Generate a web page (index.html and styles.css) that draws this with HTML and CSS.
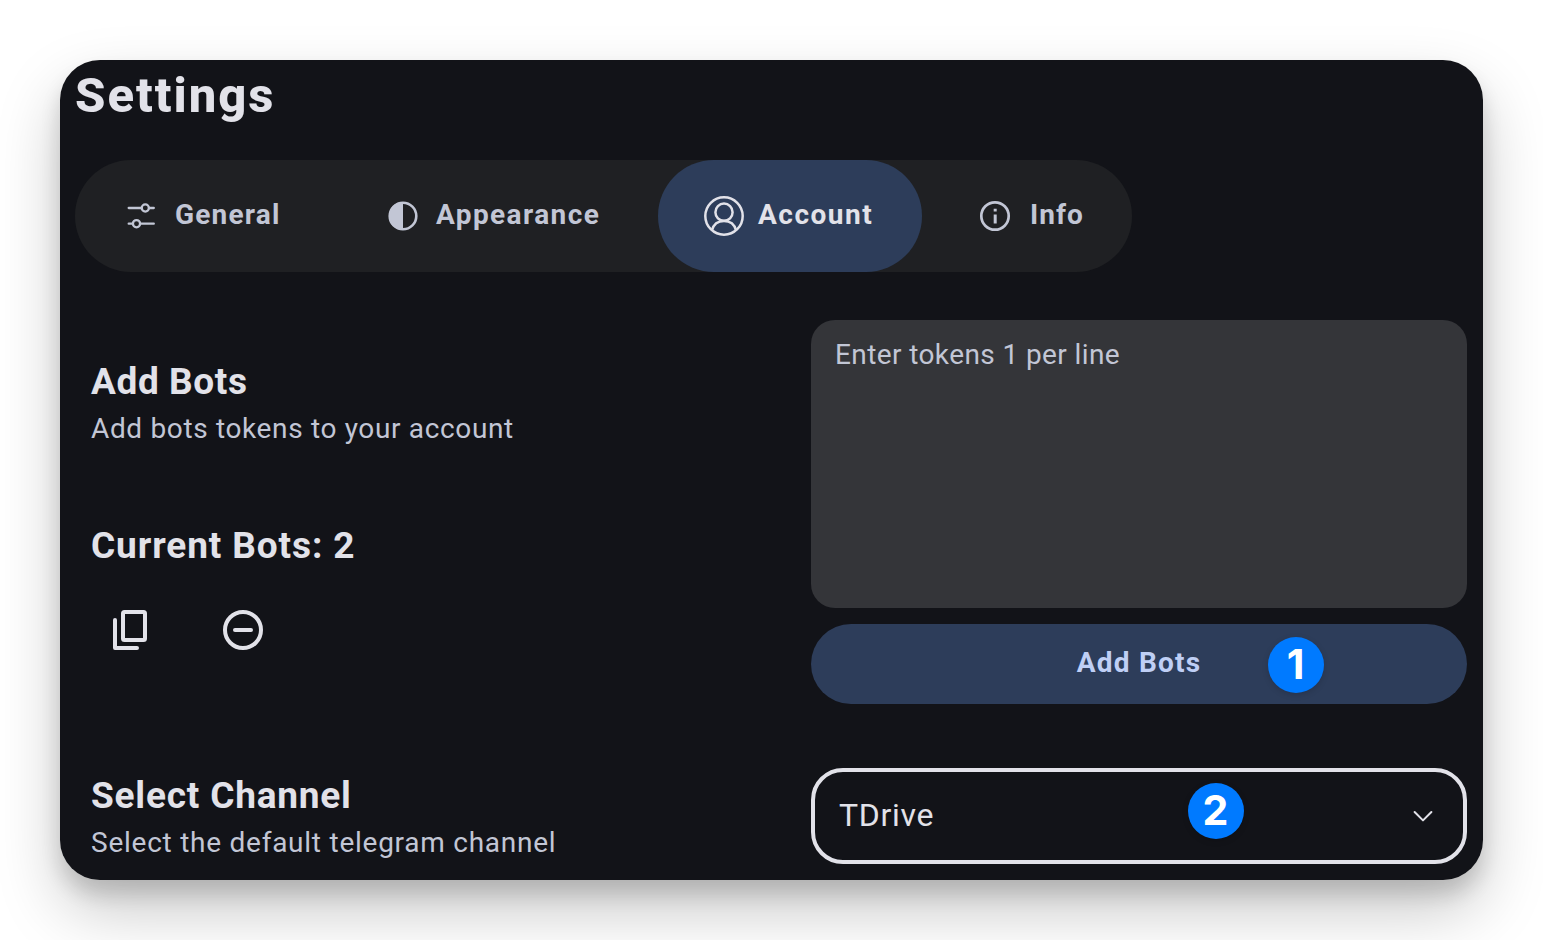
FILE: index.html
```html
<!DOCTYPE html>
<html lang="en">
<head>
<meta charset="utf-8">
<title>Settings</title>
<link rel="stylesheet" href="styles.css">
</head>
<body>
<main class="window">
  <h1 class="title"><span>Settings</span></h1>
  <nav class="tabs">
    <a class="tab tab-general">
      <svg class="icon" width="40" height="40" viewBox="0 0 40 40" fill="none" stroke="currentColor" stroke-width="2.300" stroke-linecap="round"><path d="M7.700 12H20.500M28.500 12H32.800M7.700 27.700H11.500M19.500 27.700H32.800"/><circle cx="24.300" cy="12" r="3.600"/><circle cx="15.500" cy="27.700" r="3.600"/></svg>
      <span class="label general">General</span>
    </a>
    <a class="tab tab-appearance">
      <svg class="icon" width="40" height="40" viewBox="0 0 40 40"><circle cx="20" cy="20" r="13.300" fill="none" stroke="currentColor" stroke-width="2.600"/><path d="M20 6A14 14 0 0 0 20 34Z" fill="currentColor"/></svg>
      <span class="label appearance">Appearance</span>
    </a>
    <a class="tab tab-account active">
      <svg class="icon" width="40" height="40" viewBox="0 0 40 40" fill="none" stroke="currentColor" stroke-width="2.500"><circle cx="20" cy="20" r="18.700"/><circle cx="20" cy="16.200" r="8.600"/><path d="M8 34.200C9.600 28 14.300 24.900 20 24.900S30.400 28 32 34.200"/></svg>
      <span class="label account">Account</span>
    </a>
    <a class="tab tab-info">
      <svg class="icon" width="40" height="40" viewBox="0 0 40 40"><circle cx="20" cy="20" r="13.700" fill="none" stroke="currentColor" stroke-width="2.700"/><path d="M18.700 12.700H21.700V15.500H18.700ZM18.700 18.500H21.700V27.500H18.700Z" fill="currentColor"/></svg>
      <span class="label info">Info</span>
    </a>
  </nav>

  <section class="row bots">
    <div class="copy">
      <h2 class="heading add">Add Bots</h2>
      <p class="hint tokens">Add bots tokens to your account</p>
      <h2 class="heading current">Current Bots: 2</h2>
      <div class="actions">
        <svg width="48" height="48" viewBox="0 0 48 48" fill="none" stroke="currentColor" stroke-width="4" stroke-linecap="round" stroke-linejoin="round"><rect x="16" y="6" width="22" height="28" rx="1.500"/><path d="M8 14V42H30"/></svg>
        <svg width="48" height="48" viewBox="0 0 48 48" fill="none" stroke="currentColor" stroke-width="4" stroke-linecap="round"><circle cx="24" cy="24" r="18"/><path d="M16 24H32"/></svg>
      </div>
    </div>
    <div class="controls">
      <div class="tokens-field"><span>Enter tokens 1 per line</span></div>
      <div class="button"><span>Add Bots</span><b class="badge one">1</b></div>
    </div>
  </section>

  <section class="row channel">
    <div class="copy">
      <h2 class="heading select">Select Channel</h2>
      <p class="hint default">Select the default telegram channel</p>
    </div>
    <div class="dropdown">
      <span class="value">TDrive</span>
      <svg width="24" height="24" viewBox="0 0 24 24" fill="none" stroke="currentColor" stroke-width="2" stroke-linecap="round" stroke-linejoin="round"><path d="M3.600 8L12 16.400L20.400 8"/></svg>
      <b class="badge two">2</b>
    </div>
  </section>
</main>
</body>
</html>
```
FILE: styles.css
```css
* { box-sizing: border-box; margin: 0; }
body {
  height: 940px;
  padding: 60px;
  overflow: hidden;
  background: #fff;
  color: #e2e2e9;
  font-family: Roboto, sans-serif;
  font-size: 28px;
}
.window {
  width: 1423px;
  height: 820px;
  padding: 0 16px 0 15px;
  border-radius: 40px;
  background: #121318;
  box-shadow: 0 30px 64px rgba(0, 0, 0, .22), 0 14px 20px rgba(0, 0, 0, .14);
}
span, h1, h2, p { white-space: nowrap; }
.title { height: 100px; padding-top: 4px; font-size: 49px; line-height: 64px; font-weight: 800; letter-spacing: 2px; }
.tabs {
  display: flex;
  width: 1057px;
  height: 112px;
  border-radius: 56px;
  background: #1f2023;
  color: #c2c6d5;
}
.tab { display: flex; align-items: center; height: 112px; border-radius: 56px; }
.tab-general { width: 267px; padding-left: 46px; gap: 14px; }
.tab-appearance { width: 316px; padding-left: 41px; gap: 13px; }
.tab-account { width: 264px; padding-left: 46px; gap: 14px; }
.tab-info { padding-left: 53px; gap: 15px; }
.active { background: #2d3d5a; color: #e2e2e9; }
.icon { flex: none; }
.label { font-weight: 700; line-height: 40px; margin-top: -3px; }
.general { letter-spacing: 1.2px; }
.appearance { letter-spacing: 1.4px; }
.account { letter-spacing: 1.5px; }
.info { letter-spacing: 1px; }
.row { display: grid; grid-template-columns: 720px 656px; padding-left: 16px; }
.bots { margin-top: 48px; height: 384px; }
.heading { font-size: 37px; line-height: 48px; font-weight: 700; }
.bots .copy { padding-top: 38px; }
.hint { font-size: 28px; line-height: 40px; font-weight: 450; color: #c2c6d5; margin-top: 3px; }
.add { letter-spacing: .6px; }
.current { margin-top: 73px; letter-spacing: .9px; }
.select { letter-spacing: .8px; }
.tokens { letter-spacing: .65px; }
.default { letter-spacing: .75px; }
.actions { display: flex; gap: 64px; margin-top: 36px; padding-left: 16px; }
.controls { display: flex; flex-direction: column; gap: 16px; }
.tokens-field { height: 288px; padding: 15px 24px; border-radius: 24px; background: #343539; color: #c2c6d5; font-weight: 450; line-height: 40px; letter-spacing: .4px; }
.button { position: relative; display: flex; justify-content: center; height: 80px; padding-top: 19px; border-radius: 40px; background: #2d3d5a; color: #bfcff5; font-weight: 700; line-height: 40px; letter-spacing: 1.2px; }
.channel { margin-top: 64px; }
.channel .copy { padding-top: 4px; }
.dropdown { position: relative; display: flex; align-items: center; justify-content: space-between; height: 96px; padding: 0 28px 0 24px; border: 4px solid #e2e2e9; border-radius: 32px; font-size: 32px; }
.value { margin-top: -2px; font-weight: 450; letter-spacing: .7px; }
.badge { position: absolute; display: flex; align-items: center; justify-content: center; width: 56px; height: 56px; padding-bottom: 2px; border-radius: 50%; background: #007aff; color: #fff; font: 700 41px/54px Inter, sans-serif; letter-spacing: 0; box-shadow: 0 2px 6px rgba(0, 0, 0, .15); }
.one { left: 456.500px; top: 12.500px; }
.two { left: 372.500px; top: 10.500px; }
```
